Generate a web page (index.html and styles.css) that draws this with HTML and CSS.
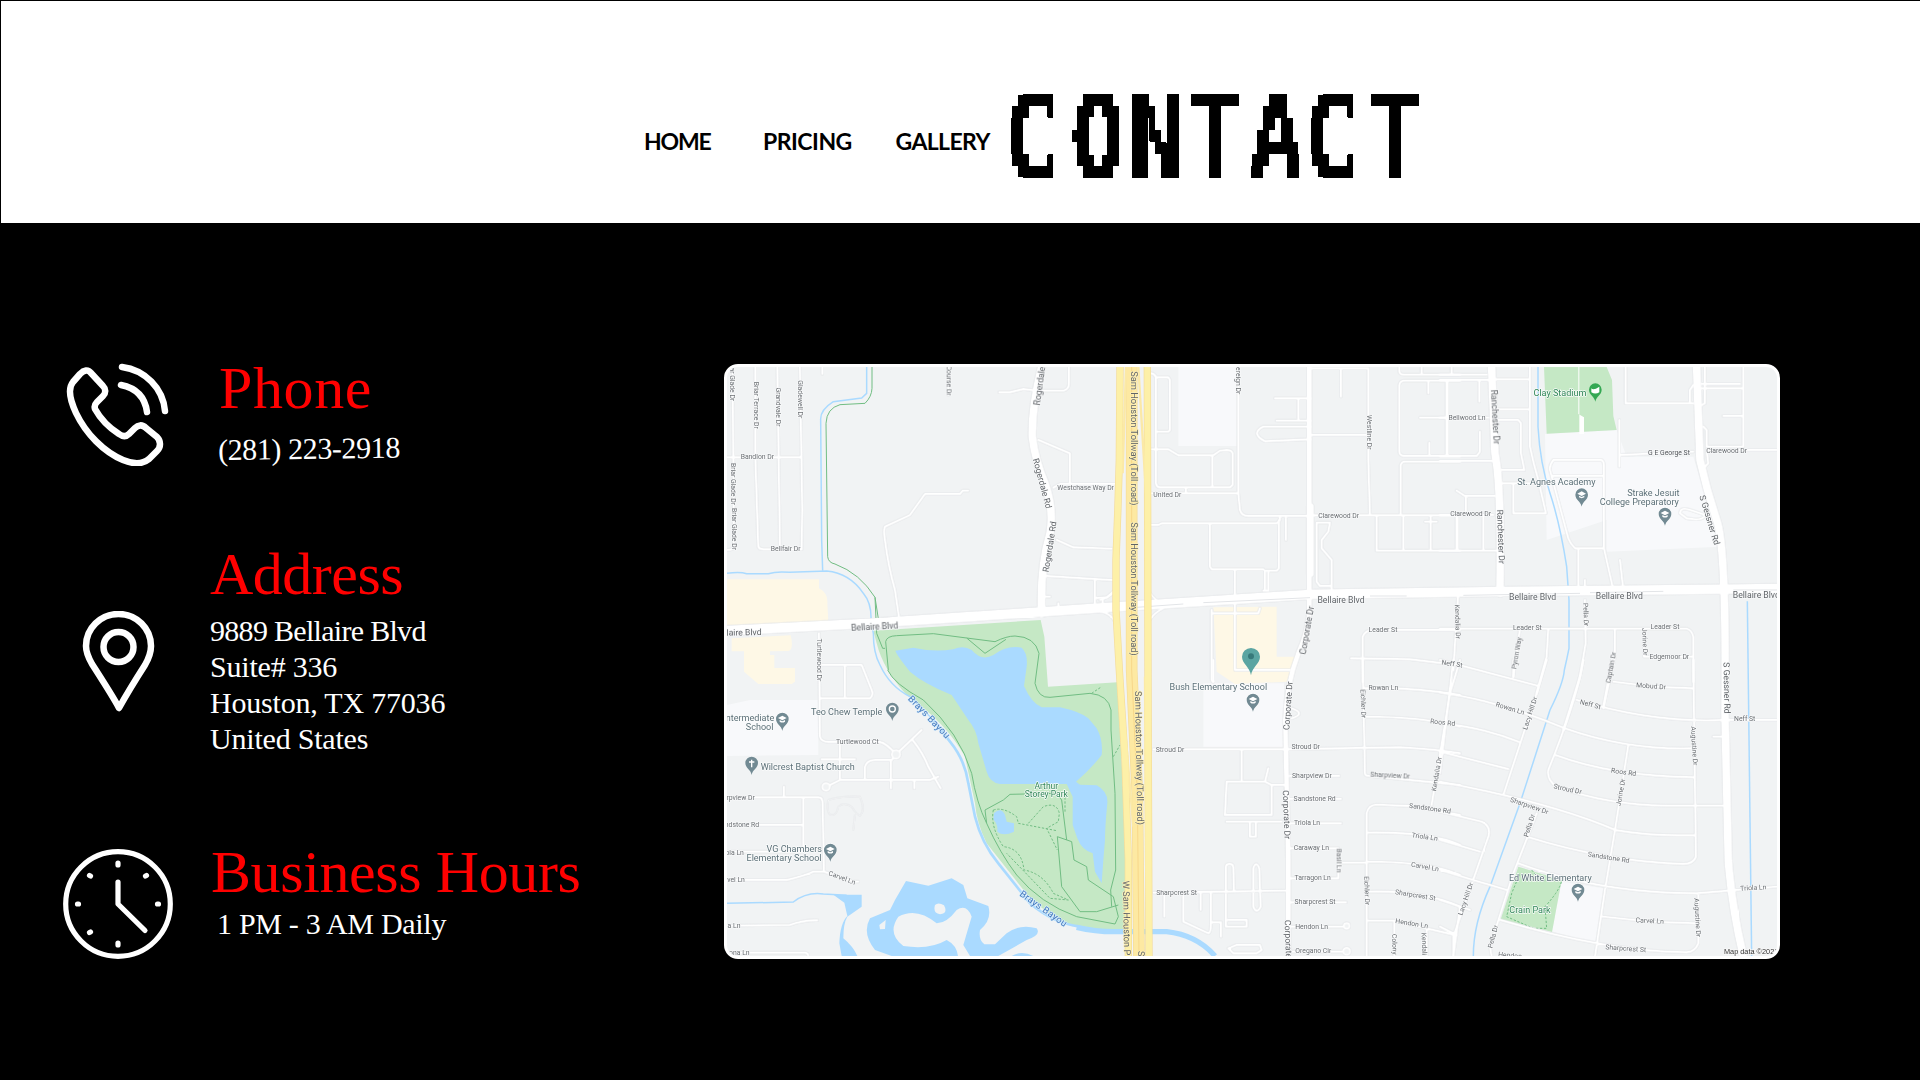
FILE: index.html
```html
<!DOCTYPE html>
<html lang="en">
<head>
<meta charset="utf-8">
<title>Contact</title>
<link rel="stylesheet" href="styles.css">
</head>
<body>
<header class="site-header">
  <nav class="nav">
    <a class="nav-link home">HOME</a>
    <a class="nav-link pricing">PRICING</a>
    <a class="nav-link gallery">GALLERY</a>
    <svg class="nav-current" width="420" height="84" viewBox="0 0 420 84" role="img" aria-label="Contact">
      <defs>
        <filter id="pixels" filterUnits="userSpaceOnUse" x="0" y="0" width="420" height="84" color-interpolation-filters="sRGB">
          <feFlood x="2" y="5" width="2" height="2" flood-color="#000" result="dot"/>
          <feOffset in="dot" x="0" y="0" width="6" height="12" dx="0" dy="0" result="cell"/>
          <feTile in="cell" result="grid"/>
          <feComposite in="SourceGraphic" in2="grid" operator="in"/>
          <feComponentTransfer><feFuncA type="discrete" tableValues="0 1"/></feComponentTransfer>
          <feMorphology operator="dilate" radius="2 5"/>
        </filter>
      </defs>
      <g filter="url(#pixels)">
        <text class="pixel-text" transform="scale(.8 1)" y="84" x="-9 74 147 222 297 366 447">CONTACT</text>
      </g>
    </svg>
  </nav>
</header>

<main class="content">
  <section class="details">
    <article class="item">
      <svg class="icon icon-phone" width="104" height="103" viewBox="0 0 104 103">
        <path d="M14 11 L7 19 C2 25 4 37 10 50 C20 71 38 89 57 97 C69 102 77 101 83 96 L91 88 C95 84 95 78 91 74 L80 65 C76 61 72 62 69 65 L63 71 C60 74 57 74 53 71 C42 64 34 55 29 46 C28 43 29 41 31 39 L37 33 C40 30 40 26 37 23 L25 10 C22 6 18 7 14 11Z"/>
        <path d="M56 4 C79 7 97 25 99 48M55 22 C70 25 79 34 81 49"/>
      </svg>
      <div class="text">
        <h2 class="phone-title">Phone</h2>
        <p class="phone-number">(281) 223-2918</p>
      </div>
    </article>
    <article class="item">
      <svg class="icon icon-pin" width="74" height="102" viewBox="0 0 74 102">
        <path d="M37 97 C33 89 19 67 10 53 C6 46 4 40 4 35 A32.5 32 0 0 1 69 35 C69 42 67 47 63 54 C54 68 42 88 37 97Z"/>
        <circle cx="36.500" cy="36" r="15"/>
      </svg>
      <div class="text">
        <h2 class="address-title">Address</h2>
        <p class="address"><span class="street">9889 Bellaire Blvd</span><br>Suite# 336<br>Houston, TX 77036<br>United States</p>
      </div>
    </article>
    <article class="item">
      <svg class="icon icon-clock" width="110" height="110" viewBox="0 0 110 110">
        <circle cx="55" cy="55" r="52.300"/>
        <path d="M55 33V55L82 81.500"/>
        <path d="M55 14V16M55 94V96M14.500 55H15.500M94.500 55H95.500M26.500 26.500L27.500 27M82.500 27L83.500 26.500M26.500 83.500L27.500 83"/>
      </svg>
      <div class="text">
        <h2 class="hours-title">Business Hours</h2>
        <p class="hours">1 PM - 3 AM Daily</p>
      </div>
    </article>
  </section>

  <figure class="map">
    <svg width="1050" height="589" viewBox="21 21 3150 1767">
      <defs>
        <path id="drop" d="M0 35C-2 19-19 15-19-1A19 19 0 1 1 19-1C19 15 2 19 0 35Z"/>
        <g id="school"><use href="#drop" fill="#fff" stroke="#fff" stroke-width="3"/><use href="#drop"/><path d="M-13-4L0-11L13-4L0 3ZM-8 2V7Q0 12 8 7V2L0 6Z" fill="#fff"/></g>
      </defs>

      <!-- Land use -->
      <g class="campus">
        <path d="M1375 21H1550V258H1375Z"/>
        <path d="M2475 222L2690 210L2720 290H2920L3000 560L2660 575V480L2480 540Z"/>
        <path d="M21 1035L90 1020H295V1185L21 1188Z"/>
        <path d="M1450 970H1692V1160H1450Z"/>
        <path d="M2525 1565L2650 1585L2625 1752L2496 1714Z"/>
      </g>
      <g class="commercial">
        <path d="M21 658H297V685Q325 700 322 730L325 785L21 796Z"/>
        <path d="M35 835L212 826Q222 868 205 873L150 874V885H163V924H225V965L215 972H115L72 935V874H35Z"/>
        <path d="M1480 742L1670 740V890H1730L1700 965L1545 972L1490 935Z"/>
      </g>
      <g class="park">
        <path d="M2472 21H2660L2676 60L2680 168L2690 210L2480 221Z"/>
        <path d="M460 812L962 780L973 830L984 980L1192 967L1210 1300L1225 1710L1110 1710Q1020 1695 930 1615L800 1450Q770 1390 765 1330L735 1190Q680 1090 560 1005Q490 930 470 850Z"/>
        <path d="M2395 1520L2525 1560L2496 1716L2342 1678Z"/>
      </g>
      <path class="cut" d="M2575 21V162L2592 172V222H2578V21Z"/>
      <g class="water">
        <path d="M526 872L580 863Q640 877 700 868Q730 855 755 870Q785 905 820 885Q860 855 905 863Q924 880 920 920L912 978Q935 1030 965 1042H1020Q1080 1055 1105 1075L1130 1105Q1150 1140 1145 1185Q1110 1230 1068 1265L1080 1274L1130 1276Q1165 1295 1162 1330Q1155 1400 1155 1440L1150 1500L1145 1570L1125 1535L1118 1480Q1085 1470 1072 1435L1058 1395V1310L1040 1272H840Q810 1268 800 1235L775 1150Q770 1110 745 1080L695 1005Q610 970 570 935Q530 885 526 872Z"/>
        <path d="M822 1360Q843 1340 855 1365L860 1385L882 1390V1415Q850 1430 832 1415Q835 1395 820 1378Z"/>
        <path d="M340 1604H425V1640L382 1670Q370 1690 370 1735Q400 1760 412 1788H365L358 1750Q360 1690 382 1668L373 1628Z"/>
        <path fill-rule="evenodd" d="M525 1620L558 1563L625 1577L695 1555L730 1575L742 1615L805 1638Q817 1680 780 1710Q775 1740 793 1753H825L860 1720Q900 1690 950 1705Q965 1725 920 1740L835 1788H750L730 1755Q740 1720 755 1670Q740 1630 710 1650Q680 1690 650 1690Q590 1640 535 1670Q500 1720 550 1758Q630 1770 680 1740Q710 1755 714 1788H515L465 1770Q425 1720 450 1675L510 1650ZM645 1635Q655 1625 672 1636Q685 1660 660 1663Q638 1660 645 1635ZM478 1695L497 1680L495 1707L480 1708Z"/>
        <path d="M875 1788Q905 1770 940 1788Z"/>
      </g>
      <g class="creek">
        <path d="M440 21V100L425 114L340 125Q300 150 302 180L305 540L308 632"/>
        <path d="M21 640Q60 635 80 641H145Q170 633 210 637L320 633Q390 640 430 700Q455 730 453 780L460 820Q460 880 480 915Q510 980 570 1010L640 1080"/>
        <path stroke-width="8" d="M640 1080L690 1145Q735 1200 745 1270L765 1370Q785 1450 835 1510L930 1630Q1000 1690 1080 1700"/>
        <path stroke-width="16" d="M1070 1702Q1130 1716 1190 1715H1340Q1430 1725 1485 1788"/>
        <path d="M21 1630L220 1626Q260 1595 310 1602L380 1606"/>
        <path d="M2454 21V200Q2460 310 2490 400T2540 620L2547 720V865Q2540 900 2533 930Q2530 970 2490 1050L2400 1330L2310 1580Q2260 1690 2260 1788"/>
        <path d="M3082 724L3095 1788"/>
      </g>
      <g class="trail">
        <path d="M456 21V85Q455 110 435 130L360 134Q320 145 318 190L323 590Q325 608 345 612Q420 640 465 712L475 776H535M465 712L470 820L488 865H495M505 930L497 845Q500 828 530 827L640 821L740 834L825 845Q860 828 885 828Q945 830 957 880L945 970Q955 1015 990 1012L1110 1000Q1165 1005 1173 1050V1110L1185 1300L1187 1530L1172 1590L1175 1640M740 834L795 880L858 838M503 930Q520 970 610 1020Q720 1120 755 1240Q770 1330 800 1390Q840 1480 890 1545Q960 1630 1070 1670L1185 1692L1195 1670L1180 1610L1105 1560L1100 1520L1062 1500L1055 1445L1012 1430L1025 1580L1080 1655H1130L1195 1635M800 1390L795 1350L850 1320L870 1303L1010 1300L1025 1320L1040 1440"/>
        <path class="dashed" d="M820 1350Q850 1340 890 1370L895 1390L1010 1412M925 1390L970 1340Q1010 1325 1018 1360L1015 1385L980 1405L1012 1470M1035 1300V1360M820 1350Q810 1400 850 1460Q905 1465 912 1530Q970 1540 1000 1600L1045 1620L990 1615L860 1480M1115 1000L1145 980M1180 1190L1200 1155M2435 1530L2460 1560L2525 1562Q2520 1590 2475 1640L2480 1705H2440L2360 1670L2375 1600L2400 1540"/>
      </g>

      <!-- Streets -->
      <g class="streets">
        <g class="minor">
          <path d="M106 21V290L115 560Q118 568 130 568H245L247 450L240 21M172 21L180 560M38 21L42 560Q40 570 21 570M21 292H240M307 21V42M685 21V105M838 97H870L910 87L950 92H1030Q1047 88 1047 70V21M745 392H728L720 402H615L570 465L495 500Q490 510 495 540Q505 620 525 690L537 772M955 240L1050 280V370M1000 383L1020 372H1185M1010 540L1060 562L1175 566M980 648L1185 661M1125 661V735M1148 715V740M1125 715L1160 712L1180 695M975 710H990M1015 730V745"/>
          <path d="M297 820L300 1130Q303 1145 325 1146H480Q500 1150 528 1183L605 1110M578 1140Q610 1180 625 1220L662 1285M360 1146V1260L320 1280M305 1198H405M360 1260H630L655 1250M435 1260V1220Q440 1200 465 1200H515L528 1183M513 1200V1285M583 1260V1285M300 1015H450Q462 1005 455 990L425 915H305M375 915V1015M21 1312H295Q308 1312 308 1330L312 1530M192 1280V1312M250 1312V1475H21M21 1395H250M21 1560H200Q260 1545 280 1535H312L400 1565H415M21 1697L210 1695Q250 1680 292 1681M21 1778H255Q265 1780 265 1788"/>
          <path class="footpath" d="M325 1320Q360 1308 420 1310Q438 1350 420 1368Q405 1360 395 1340Q370 1325 355 1340Q350 1370 330 1365Q318 1350 325 1320M405 1365L400 1410"/>
        </g>
        <g transform="translate(1170 0)" class="minor">
          <path d="M123 40Q135 42 138 52H175L180 60V210L175 215H138M138 52V370Q140 382 150 382H360L368 375V280Q365 270 350 270L330 272L310 286H205L175 268H125M307 286V382M385 21V400H120M228 382V400M385 400L390 450Q395 468 415 468H600M123 495H145L155 490H500L510 480V468M507 480V625L500 632H465V690M300 490V620L305 628H460M375 628V760M528 475V540M475 632V692H460M495 115H600M565 115V182M500 182H600M600 200H460Q420 220 465 244L600 238M600 225H775M600 25H775V300L780 465M693 25V110M600 466H1050M620 490V665L630 678H665M620 488H660L655 515L635 540V565L665 600V690M800 470V572H1050M880 470V572M962 470V572M1040 470V572M945 485H980M872 466V315Q875 305 885 305H1050M1050 288H880Q868 285 868 275V75Q870 62 885 62H1050M868 21V35Q870 44 880 44H1050M955 62V100M935 21V44M930 173H1010V62M1010 173V288M958 288V248M305 750V960Q310 968 310 965M305 760H445L450 745M375 750V930H540M758 965V830Q765 810 790 810H1050M723 895L900 898L1000 910"/>
        </g>
        <g transform="translate(2160 0)" class="minor">
          <path d="M0 44H140M0 60H160M35 21V44M22 60V288M0 173H145M0 288H110L120 275V215M118 60V125M0 303H165M165 58H268M270 21V260Q280 310 295 360L318 460H220V370H188M170 148H270M170 180H235L243 190V280L253 330H185M190 370H310M0 465H160M52 465V572M130 465V572M0 572H170M50 392L75 408H165M78 408V465M340 300H485Q492 305 492 315V565H405Q390 550 385 535L330 330Q328 315 340 300M340 348H490M415 570V690M492 565L520 690M538 180V320M540 600L550 690M540 285L760 275M557 21V130H760M557 130H750V90L760 75M785 72H900M910 21V260H800V210L790 200M785 85H910M850 168H910M785 135L795 130V21M800 270H1010M800 270L805 310L795 320M435 660V700M55 700L40 930M0 806H740Q755 810 760 830V965M525 806V890L490 1040M240 806L220 950M325 806L320 890L290 1000M435 720L437 850L420 950L370 1110M612 806V890H755M720 460Q720 440 750 450L795 465Q790 485 740 475Z"/>
        </g>
        <g transform="translate(1170 900)" class="minor">
          <path d="M310 0V65M130 268H520L870 262Q980 268 1050 280M395 268V360M525 375H485L465 365H350L345 465H485V375M475 325L465 365M350 485H515M420 485V530H438V485M130 698L525 692M163 700V770M220 700V785L295 820Q303 818 303 790V700M272 700V750M303 787H333V830M348 692V620Q348 612 358 612Q370 612 370 622L372 692M348 692V800H410V780H355M430 692V625Q438 600 448 625L452 740Q440 765 430 740ZM380 855H450L455 870L440 880H370L355 865ZM540 348H688M540 417H693M540 490H693M540 565H685V655H540M690 608H770M540 727H708M540 800H700M540 875H705M758 0L765 340Q765 348 780 348L1050 375M760 85Q900 80 1050 105M765 170Q940 170 1050 200M770 890V460Q775 435 800 434L900 438L1050 465M770 518Q960 515 1050 555M770 605Q960 605 1050 645M770 695Q940 690 1050 740M770 782H850L1035 825M1050 0L1020 100L965 435M853 785V890M950 800V890M1050 740L1030 890M545 145Q590 160 545 175"/>
        </g>
        <g transform="translate(2160 900)" class="minor">
          <path d="M0 0L295 78M40 0L0 340M0 98Q170 120 375 205Q560 270 755 265M0 190Q120 200 235 245M0 275L205 327M220 0V50M320 0L290 100L190 405M430 0Q410 120 325 330Q320 360 350 380Q500 435 680 437H850M515 0L490 145M520 65L640 80L755 85M410 120Q640 190 850 180H1010M345 285Q520 350 765 352M0 365Q340 430 525 510Q640 530 765 525M760 0L768 590Q760 612 730 612Q500 605 260 530M290 460L220 640L150 860L155 890M235 610Q480 700 770 700L1010 680M0 455L125 485Q155 500 145 530L40 830V890M0 540L120 575M0 630L200 690M0 720L90 750M0 800L50 825M565 255L525 510L495 690L465 890M775 700V850Q765 875 740 877Q500 875 180 780M490 770L630 785L765 790M820 230H850"/>
        </g>
        <g class="medium">
          <path d="M1768 21V740Q1770 800 1735 880Q1700 970 1696 1080L1705 1500V1788"/>
          <path stroke-width="23" d="M1771 440V640"/>
          <path stroke-width="25" d="M965 21Q935 140 937 230Q945 300 975 370Q1003 450 990 520Q960 620 965 760M2315 21L2325 280Q2345 380 2340 700M2930 21L2940 300Q2960 390 2990 480Q3020 560 3015 1060L3025 1500Q3035 1640 3070 1788"/>
        </g>
        <path class="major" d="M21 812L450 790L1170 742L1780 703L2400 694L3171 686"/>
        <path class="junction" d="M1140 720Q1180 710 1190 680M1280 680Q1290 710 1330 735M1140 755Q1180 760 1190 800M1280 800Q1290 765 1330 745"/>
        <circle cx="528" cy="1183" r="13"/><circle cx="318" cy="1281" r="12"/><circle cx="1880" cy="1698" r="9"/><circle cx="1880" cy="1774" r="11"/>
      </g>
      <path class="median" d="M1250 742L1390 732M1450 728L1770 713M1950 708H2060M2230 706L2580 700M2610 698L2830 694M3040 690H3171"/>

      <!-- Toll road -->
      <g class="toll">
        <path d="M1200 21L1198 300Q1194 450 1188 600V750L1198 930L1215 1200L1225 1500V1788"/>
        <path class="wide" d="M1235 21V930L1252 1300L1257 1788"/>
        <path d="M1282 21L1284 930L1287 1788"/>
        <path class="ramp" d="M1218 21L1208 340M1255 21L1278 400M1195 870L1240 1400M1275 950L1278 1500L1285 1788"/>
      </g>
      <g class="toll fill">
        <path d="M1200 21L1198 300Q1194 450 1188 600V750L1198 930L1215 1200L1225 1500V1788"/>
        <path class="wide" d="M1235 21V930L1252 1300L1257 1788"/>
        <path d="M1282 21L1284 930L1287 1788"/>
        <path class="line" d="M1235 21V930L1252 1300L1257 1788"/>
      </g>

      <!-- Street names -->
      <g class="names">
        <text transform="translate(37 73) rotate(90)">ar Glade Dr</text>
        <text transform="translate(108 136) rotate(90)">Briar Terrace Dr</text>
        <text transform="translate(174 141) rotate(90)">Grandvale Dr</text>
        <text transform="translate(240 118) rotate(90)">Gladewell Dr</text>
        <text transform="translate(40 372) rotate(90)">Briar Glade Dr</text>
        <text transform="translate(43 507) rotate(90)">Briar Glade Dr</text>
        <text x="112" y="290">Bandlon Dr</text><text x="197" y="566">Bellfair Dr</text>
        <text transform="translate(685 62) rotate(90)">Course Dr</text>
        <text x="1097" y="383">Westchase Way Dr</text>
        <text transform="translate(297 900) rotate(90)">Turtlewood Dr</text>
        <text x="412" y="1147">Turtlewood Ct</text>
        <text x="62" y="1313">rpview Dr</text><text x="66" y="1395">ndstone Rd</text><text x="44" y="1478">ola Ln</text><text x="48" y="1560">vel Ln</text><text x="42" y="1697">a Ln</text><text x="58" y="1778">ona Ln</text>
        <text transform="translate(366 1554) rotate(20)">Carvel Ln</text>
        <text transform="translate(1555 62) rotate(90)">ereign Dr</text>
        <text x="1342" y="405">United Dr</text><text x="1856" y="468">Clarewood Dr</text>
        <text transform="translate(1948 217) rotate(90)">Westline Dr</text>
        <text x="2241" y="173">Bellwood Ln</text><text x="2252" y="463">Clarewood Dr</text>
        <text x="2847" y="278" class="dark">G E George St</text><text x="3020" y="273">Clarewood Dr</text>
        <text x="1989" y="811">Leader St</text><text x="2422" y="805">Leader St</text><text x="2835" y="801">Leader St</text>
        <text transform="translate(2212 785) rotate(88)">Kendalia Dr</text>
        <text transform="translate(2196 912) rotate(8)">Neff St</text>
        <text transform="translate(2392 880) rotate(-80)">Pyron Way</text>
        <text transform="translate(2597 764) rotate(88)">Pella Dr</text>
        <text transform="translate(2774 845) rotate(88)">Jorine Dr</text>
        <text x="2848" y="892">Edgemoor Dr</text>
        <text transform="translate(2675 923) rotate(-79)">Captain Dr</text>
        <text x="1350" y="1169">Stroud Dr</text><text x="1757" y="1161">Stroud Dr</text>
        <text x="1776" y="1247">Sharpview Dr</text><text x="1784" y="1317">Sandstone Rd</text><text x="1761" y="1390">Triola Ln</text><text x="1774" y="1464">Caraway Ln</text><text x="1778" y="1554">Tarragon Ln</text><text x="1785" y="1627">Sharpcrest St</text><text x="1775" y="1700">Hendon Ln</text><text x="1780" y="1774">Oregano Cir</text><text x="1370" y="1598">Sharpcrest St</text>
        <text transform="translate(1855 1502) rotate(90)">Basil Ln</text>
        <text transform="translate(1929 1031) rotate(88)">Eichler Dr</text><text transform="translate(1940 1592) rotate(88)">Eichler Dr</text>
        <text x="1990" y="985">Rowan Ln</text>
        <text transform="translate(2168 1088) rotate(6)">Roos Rd</text>
        <text transform="translate(2010 1248) rotate(3)">Sharpview Dr</text>
        <text transform="translate(2151 1242) rotate(-80)">Kendalia Dr</text>
        <text transform="translate(2130 1346) rotate(8)">Sandstone Rd</text>
        <text transform="translate(2114 1431) rotate(8)">Triola Ln</text>
        <text transform="translate(2115 1521) rotate(10)">Carvel Ln</text>
        <text transform="translate(2086 1606) rotate(9)">Sharpcrest St</text>
        <text transform="translate(2075 1691) rotate(9)">Hendon Ln</text>
        <text transform="translate(2023 1753) rotate(88)">Colony</text><text transform="translate(2112 1752) rotate(88)">Kendali</text>
        <text transform="translate(2370 1046) rotate(17)">Rowan Ln</text>
        <text transform="translate(2431 1060) rotate(-72)">Lacy Hill Dr</text>
        <text transform="translate(2611 1034) rotate(14)">Neff St</text>
        <text transform="translate(2793 979) rotate(4)">Mobud Dr</text>
        <text x="3074" y="1077">Neff St</text>
        <text transform="translate(2922 1158) rotate(87)">Augustine Dr</text>
        <text transform="translate(2711 1237) rotate(8)">Roos Rd</text>
        <text transform="translate(2543 1288) rotate(12)">Stroud Dr</text>
        <text transform="translate(2703 1297) rotate(-80)">Jorine Dr</text>
        <text transform="translate(2428 1338) rotate(19)">Sharpview Dr</text>
        <text transform="translate(2429 1397) rotate(-72)">Pella Dr</text>
        <text transform="translate(2666 1493) rotate(9)">Sandstone Rd</text>
        <text transform="translate(2238 1617) rotate(-71)">Lacy Hill Dr</text>
        <text transform="translate(2320 1730) rotate(-75)">Pella Dr</text>
        <text transform="translate(3100 1584) rotate(-3)">Triola Ln</text>
        <text transform="translate(2789 1683) rotate(3)">Carvel Ln</text>
        <text transform="translate(2717 1766) rotate(4)">Sharpcrest St</text>
        <text transform="translate(2932 1673) rotate(87)">Augustine Dr</text>
        <text transform="translate(2370 1787) rotate(5)">Hendon</text>
      </g>
      <g class="names large">
        <text transform="translate(960 78) rotate(-82)">Rogerdale</text>
        <text transform="translate(967 370) rotate(75)">Rogerdale Rd</text>
        <text transform="translate(989 560) rotate(-81)">Rogerdale Rd</text>
        <text transform="translate(72 817) rotate(-1)">laire Blvd</text><text transform="translate(464 801) rotate(-3)">Bellaire Blvd</text>
        <text x="1863" y="719">Bellaire Blvd</text><text x="2438" y="712">Bellaire Blvd</text><text x="2698" y="709">Bellaire Blvd</text><text x="3109" y="704">Bellaire Blvd</text>
        <text transform="translate(2325 171) rotate(87)">Ranchester Dr</text><text transform="translate(2343 530) rotate(88)">Ranchester Dr</text>
        <text transform="translate(2969 480) rotate(73)">S Gessner Rd</text><text transform="translate(3021 984) rotate(89)">S Gessner Rd</text>
        <text transform="translate(1762 811) rotate(-80)">Corporate Dr</text><text transform="translate(1704 1037) rotate(-86)">Corporate Dr</text><text transform="translate(1700 1364) rotate(88)">Corporate Dr</text><text transform="translate(1705 1737) rotate(88)">Corporate</text>
        <g class="highway">
          <text textLength="403" transform="translate(1243 235) rotate(90)">Sam Houston Tollway (Toll road)</text>
          <text textLength="400" transform="translate(1243 687) rotate(90)">Sam Houston Tollway (Toll road)</text>
          <text textLength="402" transform="translate(1259 1194) rotate(89)">Sam Houston Tollway (Toll road)</text>
          <text textLength="224" transform="translate(1221 1674) rotate(89)">W Sam Houston P</text>
          <text transform="translate(1265 1781) rotate(89)">S</text>
        </g>
        <g class="river">
          <text textLength="166" transform="translate(628 1070) rotate(46)">Brays Bayou</text>
          <text textLength="166" transform="translate(971 1645) rotate(35)">Brays Bayou</text>
        </g>
      </g>

      <!-- Places -->
      <g class="places">
        <text class="green" x="2520" y="99">Clay Stadium</text>
        <text x="2509" y="367">St. Agnes Academy</text>
        <text x="2800" y="398">Strake Jesuit</text><text x="2758" y="426">College Preparatory</text>
        <text x="90" y="1073">ntermediate</text><text x="119" y="1101">School</text>
        <text x="380" y="1057">Teo Chew Temple</text><text x="263" y="1220">Wilcrest Baptist Church</text>
        <text x="223" y="1466">VG Chambers</text><text x="192" y="1494">Elementary School</text>
        <text class="green small" x="979" y="1277">Arthur</text><text class="green small" x="979" y="1303">Storey Park</text>
        <text x="1495" y="982">Bush Elementary School</text>
        <text x="2491" y="1554">Ed White Elementary</text><text class="green" x="2430" y="1651">Crain Park</text>
      </g>
      <g class="pins">
        <use href="#school" x="187" y="1078"/><use href="#school" x="331" y="1471"/><use href="#school" x="1599" y="1021"/>
        <use href="#school" x="2585" y="405"/><use href="#school" x="2835" y="463"/><use href="#school" x="2574" y="1591"/>
        <use href="#drop" x="517" y="1048"/><circle class="ring" cx="517" cy="1047" r="9"/>
        <use href="#drop" x="95" y="1210"/><path class="ring" d="M95 1199V1222M87 1206H103"/>
        <g class="stadium"><use href="#drop" x="2626" y="90"/><path d="M2614 85Q2620 92 2638 80V97Q2626 104 2614 97Z" fill="#fff"/></g>
      </g>
      <path class="marker" d="M1593 946C1590 920 1566 912 1566 890A27 26 0 0 1 1620 890C1620 912 1596 920 1593 946Z"/>
      <circle class="marker-dot" cx="1593" cy="889" r="9"/>
      <text class="credit" x="3012" y="1783">Map data ©2021</text>
    </svg>
  </figure>
</main>
</body>
</html>
```
FILE: styles.css
```css
* { box-sizing: border-box; }
body { margin: 0; width: 1920px; height: 1080px; overflow: hidden; background: #000; }
h2, p, figure { margin: 0; }

.site-header { height: 223px; background: #fff; border-top: 1px solid #000; border-left: 1px solid #000; }
.nav { display: grid; grid-template-columns: 119px 132.5px 114.5px 420px; padding: 93px 0 0 643px; align-items: start; }
.nav-link { padding-top: 33px; font: 700 23px/28px Lato, sans-serif; color: #000; white-space: nowrap; }
.home { letter-spacing: -1.2px; }
.pricing { letter-spacing: -0.5px; }
.gallery { letter-spacing: -0.6px; }
.nav-current { margin-left: 1px; }
.pixel-text { font: 700 115px "DejaVu Sans Mono", monospace; fill: #000; }

.content { display: flex; align-items: flex-start; padding-left: 63px; }
.details { width: 661px; padding-top: 135px; display: flex; flex-direction: column; }
.item { display: grid; grid-template-columns: 147px 1fr; align-items: start; }
.item + .item { margin-top: 77px; }
.item + .item + .item { margin-top: 85px; }
.icon { fill: none; stroke: #fff; stroke-width: 6.5; stroke-linecap: round; stroke-linejoin: round; }
.icon-phone { margin: 5px 0 0 3px; }
.icon-pin { margin: 67px 0 0 19px; }
.icon-clock { margin-top: 7px; stroke-width: 5.2; }
.text { font-family: "Liberation Serif", serif; white-space: nowrap; }
.text h2 { color: #f00; font-size: 60px; font-weight: 400; line-height: 60px; }
.text p { color: #fff; font-size: 30px; line-height: 36px; }
.phone-title { padding-left: 9px; margin-bottom: 13px; letter-spacing: 0.6px; }
.phone-number { padding-left: 8px; letter-spacing: -0.4px; transform: rotate(-0.8deg); transform-origin: 90px 18px; }
.address-title { margin-bottom: 9px; letter-spacing: -0.5px; }
.address { letter-spacing: -0.2px; }
.street { letter-spacing: -0.7px; }
.hours-title { margin-bottom: 4px; padding-left: 1px; letter-spacing: -0.4px; }
.hours { padding-left: 7px; letter-spacing: -0.3px; }

.map { margin-top: 141px; width: 1056px; height: 595px; border: 3px solid #fff; border-radius: 14px; overflow: hidden; background: #f1f3f4; }
.map svg { display: block; }
.campus { fill: #f8f9fb; }
.commercial { fill: #fef8e6; }
.park { fill: #c5e8c5; }
.cut { fill: #fff; }
.water { fill: #aadaff; }
.creek { fill: none; stroke: #aadaff; stroke-width: 4.5; }
.trail { fill: none; stroke: #71bd83; stroke-width: 3; stroke-linejoin: round; }
.dashed { stroke-dasharray: 7 5; }
.streets { fill: none; stroke: #fff; stroke-linecap: round; stroke-linejoin: round; filter: drop-shadow(0 0 1.8px #c3c7cc); }
.minor { stroke-width: 8; }
.footpath { stroke-width: 3; }
.medium { stroke-width: 16; }
.major { stroke-width: 31; }
.junction { stroke-width: 7; }
.streets circle { fill: #f1f3f4; stroke-width: 6; }
.median { fill: none; stroke: #e3e5e8; stroke-width: 3; }
.toll { fill: none; stroke: #f4dc9a; stroke-width: 22; }
.toll .wide { stroke-width: 35; }
.toll .ramp { stroke-width: 7; stroke: #fbe9a7; }
.toll.fill { stroke: #fdf0a8; stroke-width: 18; }
.toll.fill .wide { stroke-width: 31; stroke: #fde9a2; }
.toll.fill .line { stroke-width: 3; stroke: #f7d78a; }
.names { font: 20.5px Roboto, sans-serif; fill: #6c7074; text-anchor: middle; dominant-baseline: central; paint-order: stroke; stroke: #f8f9fa; stroke-width: 4; stroke-linejoin: round; }
.names .dark { fill: #505458; }
.large { font-size: 26px; fill: #606468; }
.highway { stroke: #fdf0b8; font-size: 28px; }
.river { fill: #4278be; stroke: #d8edfb; font-size: 28.5px; }
.places { font: 27.2px Roboto, sans-serif; fill: #5c7078; text-anchor: middle; dominant-baseline: central; paint-order: stroke; stroke: #fbfcfc; stroke-width: 4; stroke-linejoin: round; }
.places .green { fill: #2f8656; }
.places .small { font-size: 25.5px; }
.pins { fill: #728a93; }
.ring { fill: none; stroke: #fff; stroke-width: 4; }
.stadium { fill: #34a853; }
.marker { fill: #5ba5a2; }
.marker-dot { fill: #37797a; }
.credit { font: 22px "Liberation Sans", sans-serif; fill: #333; paint-order: stroke; stroke: #f8f8f8; stroke-width: 5; }
```
